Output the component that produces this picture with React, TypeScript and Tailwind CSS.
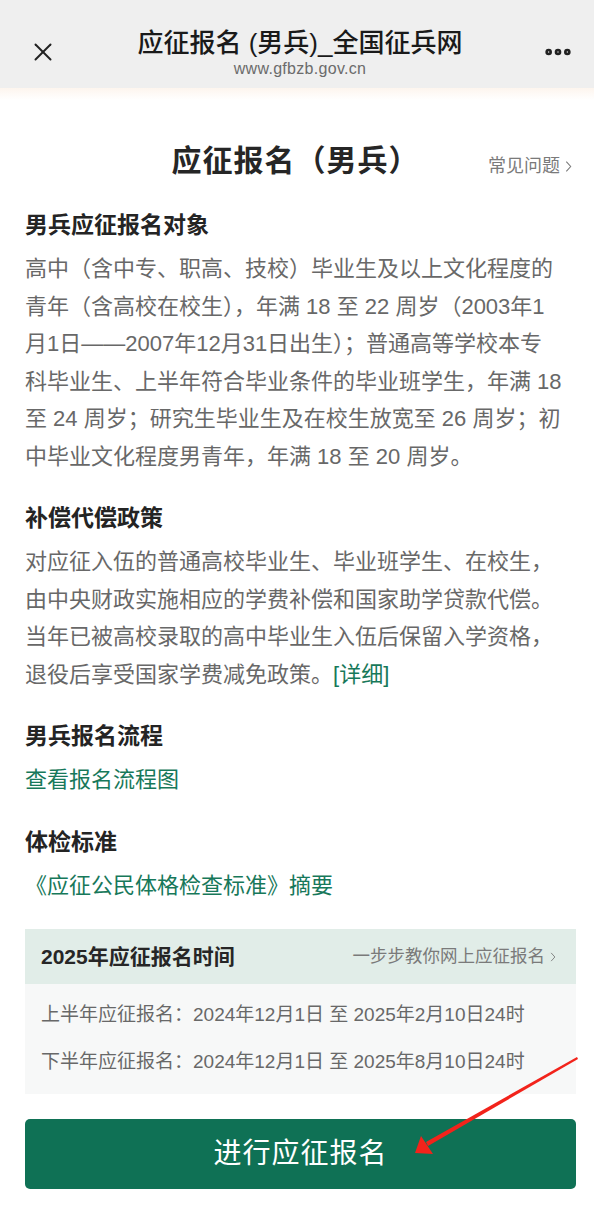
import { X, MoreHorizontal } from "lucide-react";

const font = {
	fontFamily: '"Liberation Sans", "Noto Sans CJK SC", "Noto Sans", sans-serif',
};

const Chevron = ({ className }: { className?: string }) => (
	<svg
		className={className}
		viewBox="0 0 8 14"
		fill="none"
		stroke="currentColor"
		strokeWidth={1.2}
	>
		<path d="M1.5 1.5l5 5.5-5 5.5" />
	</svg>
);

const Section = ({
	title,
	first,
	children,
}: {
	title: string;
	first?: boolean;
	children: React.ReactNode;
}) => (
	<div className={first ? "mt-[18px]" : "mt-[26px]"}>
		<h2 className="text-[23px] leading-[34px] font-semibold text-[#242424]">
			{title}
		</h2>
		<div className="mt-[8px] text-[22px] leading-[37.5px]">{children}</div>
	</div>
);

const objectLines = [
	"高中（含中专、职高、技校）毕业生及以上文化程度的",
	"青年（含高校在校生），年满 18 至 22 周岁（2003年1",
	"月1日——2007年12月31日出生）；普通高等学校本专",
	"科毕业生、上半年符合毕业条件的毕业班学生，年满 18",
	"至 24 周岁；研究生毕业生及在校生放宽至 26 周岁；初",
	"中毕业文化程度男青年，年满 18 至 20 周岁。",
];

const policyLines = [
	"对应征入伍的普通高校毕业生、毕业班学生、在校生，",
	"由中央财政实施相应的学费补偿和国家助学贷款代偿。",
	"当年已被高校录取的高中毕业生入伍后保留入学资格，",
];

export default function App() {
	return (
		<div className="relative min-h-[1222px] bg-white" style={font}>
			{/* browser top bar */}
			<div className="h-[88px] bg-[#efefef] flex items-center pl-[28px] pr-[20px] pt-[16px]">
				<X className="w-[30px] h-[30px] text-[#222]" strokeWidth={1.6} />
				<div className="flex-1 flex flex-col items-center mt-[1px]">
					<div className="text-[26px] leading-[32px] text-[#1a1a1a] font-medium">
						应征报名 (男兵)_全国征兵网
					</div>
					<div className="text-[16px] leading-[20px] text-[#6b6b6b] tracking-[0.3px]">
						www.gfbzb.gov.cn
					</div>
				</div>
				<MoreHorizontal
					className="w-[32px] h-[32px] text-[#222]"
					strokeWidth={3}
				/>
			</div>
			<div className="h-[12px] bg-gradient-to-b from-[#fdf5ee] to-white" />

			<div className="pl-[25px] pr-[18px]">
				{/* page title */}
				<div className="relative flex justify-center items-center h-[60px] mt-[30px]">
					<h1 className="text-[30px] font-bold text-[#262626] tracking-[1px] pr-[10px]">
						应征报名（男兵）
					</h1>
					<div className="absolute right-[4px] top-[24px] flex items-center gap-[5px] text-[18px] leading-[24px] text-[#7a7a7a]">
						常见问题
						<Chevron className="w-[7px] h-[13px]" />
					</div>
				</div>

				<Section title="男兵应征报名对象" first>
					<p className="text-[#686868] whitespace-nowrap">
						{objectLines.map((line) => (
							<span key={line} className="block">
								{line}
							</span>
						))}
					</p>
				</Section>

				<Section title="补偿代偿政策">
					<p className="text-[#686868] whitespace-nowrap">
						{policyLines.map((line) => (
							<span key={line} className="block">
								{line}
							</span>
						))}
						<span className="block">
							退役后享受国家学费减免政策。
							<a className="text-[#17785a]">[详细]</a>
						</span>
					</p>
				</Section>

				<Section title="男兵报名流程">
					<p className="text-[#17785a]">查看报名流程图</p>
				</Section>

				<Section title="体检标准">
					<p className="text-[#17785a]">《应征公民体格检查标准》摘要</p>
				</Section>

				{/* registration time card */}
				<div className="mt-[25px]">
					<div className="h-[55px] bg-[#e1ede8] flex items-center justify-between pl-[16px] pr-[20px]">
						<span className="text-[21px] font-bold text-[#262626]">
							2025年应征报名时间
						</span>
						<span className="flex items-center gap-[5px] text-[17.5px] text-[#7a7a7a]">
							一步步教你网上应征报名
							<Chevron className="w-[6px] h-[12px]" />
						</span>
					</div>
					<div className="bg-[#f7f8f8] px-[16px] pt-[18px] pb-[20px] flex flex-col gap-[22px] text-[19px] leading-[25px] text-[#686868]">
						<div>上半年应征报名：2024年12月1日 至 2025年2月10日24时</div>
						<div>下半年应征报名：2024年12月1日 至 2025年8月10日24时</div>
					</div>
				</div>

				<button className="mt-[25px] w-full h-[70px] rounded-[5px] bg-[#0f7155] text-white text-[28px] tracking-[1px]">
					进行应征报名
				</button>
			</div>

			{/* red annotation arrow */}
			<svg
				className="absolute left-0 top-0 pointer-events-none"
				width="594"
				height="1222"
				viewBox="0 0 594 1222"
			>
				<polygon
					points="577,1057 578,1059 428,1146 426,1142"
					fill="#f2231b"
				/>
				<polygon points="415,1153 421,1136 433,1154" fill="#f2231b" />
			</svg>
		</div>
	);
}
